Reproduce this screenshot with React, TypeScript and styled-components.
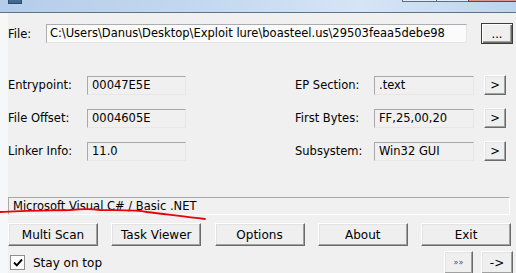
import React from 'react';
import styled, { createGlobalStyle } from 'styled-components';

const GlobalStyle = createGlobalStyle`
  html, body {
    margin: 0;
    padding: 0;
    background: #f0f0f0;
  }
  body {
    font-family: "DejaVu Sans", Verdana, sans-serif;
    font-size: 11.5px;
    color: #000;
  }
`;

type Field = { label: string; value: string };

const LEFT_FIELDS: Field[] = [
  { label: 'Entrypoint:', value: '00047E5E' },
  { label: 'File Offset:', value: '0004605E' },
  { label: 'Linker Info:', value: '11.0' },
];

const RIGHT_FIELDS: Field[] = [
  { label: 'EP Section:', value: '.text' },
  { label: 'First Bytes:', value: 'FF,25,00,20' },
  { label: 'Subsystem:', value: 'Win32 GUI' },
];

const ACTIONS = ['Multi Scan', 'Task Viewer', 'Options', 'About', 'Exit'];

const App: React.FC = () => {
  return (
    <>
      <GlobalStyle />
      <SWindow>
        <STitleBar>
          <STitleIcon />
          <STitleText>File Info</STitleText>
          <SCaption>
            <SCaptionButton width={35} />
            <SCaptionButton width={33} />
            <SCaptionButton width={54} close />
          </SCaption>
        </STitleBar>

        <SClient>
          <SFileRow>
            <SLabel>File:</SLabel>
            <SPathBox>C:\Users\Danus\Desktop\Exploit lure\boasteel.us\29503feaa5debe98</SPathBox>
            <SBrowseButton>...</SBrowseButton>
          </SFileRow>

          <SFields>
            <SColumn>
              {LEFT_FIELDS.map((f) => (
                <SFieldRow key={f.label}>
                  <SFieldLabel>{f.label}</SFieldLabel>
                  <SValueBox width={99}>{f.value}</SValueBox>
                </SFieldRow>
              ))}
            </SColumn>
            <SColumn>
              {RIGHT_FIELDS.map((f) => (
                <SFieldRow key={f.label}>
                  <SFieldLabel>{f.label}</SFieldLabel>
                  <SValueBox width={100}>{f.value}</SValueBox>
                  <SSmallButton>&gt;</SSmallButton>
                </SFieldRow>
              ))}
            </SColumn>
          </SFields>

          <SStatusWrap>
            <SStatusBox>Microsoft Visual C# / Basic .NET</SStatusBox>
            {/* red hand-drawn underline from the screenshot */}
            <SScribble viewBox="0 0 210 12" width={210} height={12}>
              <path
                d="M0 3 C 20 1.5, 45 1.5, 70 1 C 80 0, 90 -0.5, 100 1 C 115 1.5, 135 0.5, 147 3 C 165 5, 185 8, 205 10"
                fill="none"
                stroke="#e8000b"
                strokeWidth={1.8}
                strokeLinecap="round"
              />
            </SScribble>
          </SStatusWrap>

          <SActions>
            {ACTIONS.map((a) => (
              <SActionButton key={a}>{a}</SActionButton>
            ))}
          </SActions>

          <SBottomRow>
            <SCheckLabel>
              <SCheckBox>
                <svg width="10" height="9" viewBox="0 0 10 9">
                  <path d="M1 4.5 L3.8 7.3 L9 1.5" fill="none" stroke="#000" strokeWidth={1.9} />
                </svg>
              </SCheckBox>
              Stay on top
            </SCheckLabel>
            <SNavButtons>
              <SNavButton small>»»</SNavButton>
              <SNavButton>-&gt;</SNavButton>
            </SNavButtons>
          </SBottomRow>
        </SClient>
      </SWindow>
    </>
  );
};

const SWindow = styled.div`
  display: flex;
  flex-direction: column;
  width: 516px;
  height: 273px;
  overflow: hidden;
  background: #f0f0f0;
`;

const STitleBar = styled.div`
  display: flex;
  align-items: flex-end;
  height: 12px;
  padding-left: 8px;
  overflow: hidden;
  background: linear-gradient(90deg, #b4cde9 0%, #c6daf0 45%, #d6e5f5 70%, #bed4ec 100%);
  border-bottom: 1px solid #5d738c;
  flex-shrink: 0;
`;

const STitleIcon = styled.div`
  width: 12px;
  height: 14px;
  margin-bottom: 8px;
  background: linear-gradient(180deg, #6f8fb3, #3f628e);
  border: 1px solid #2d4a70;
`;

const STitleText = styled.div`
  margin-left: 7px;
  margin-bottom: 9px;
  font-family: "DejaVu Sans", sans-serif;
  font-size: 12px;
  line-height: 14px;
  color: #000;
`;

const SCaption = styled.div`
  display: flex;
  align-self: flex-start;
  margin-left: auto;
  margin-right: -6px;
`;

const SCaptionButton = styled.div<{ width: number; close?: boolean }>`
  width: ${(p) => p.width}px;
  height: 2px;
  box-sizing: border-box;
  background: ${(p) => (p.close ? '#d89a8e' : '#e3edf7')};
  border: 1px solid ${(p) => (p.close ? '#7b3a30' : '#5f6f82')};
  border-top: none;
  margin-left: -1px;
`;

const SClient = styled.div`
  display: flex;
  flex-direction: column;
  flex: 1;
  padding: 10px 3px 0 8px;
  background: #f0f0f0;
  box-shadow: inset 8px 0 0 #f6f7f9;
`;

const SLabel = styled.div`
  white-space: nowrap;
`;

const SFileRow = styled.div`
  display: flex;
  align-items: center;
  height: 21px;

  ${SLabel} {
    width: 38px;
  }
`;

const SPathBox = styled.div`
  width: 422px;
  height: 19px;
  box-sizing: border-box;
  padding: 0 3px;
  line-height: 17px;
  background: #fbfbfb;
  border: 1px solid #e2e4e7;
  border-top-color: #abadb3;
  border-left-color: #abadb3;
  white-space: nowrap;
  overflow: hidden;
`;

const SButtonBase = styled.button`
  box-sizing: border-box;
  padding: 0;
  font-family: inherit;
  font-size: inherit;
  color: #000;
  background: #efefef;
  border: 1px solid;
  border-color: #ffffff #6b6b6b #6b6b6b #ffffff;
  box-shadow: inset -1px -1px 0 #a0a0a0, inset 1px 1px 0 #e3e3e3;
  cursor: default;
`;

const SBrowseButton = styled(SButtonBase)`
  width: 32px;
  height: 21px;
  margin-left: 14px;
  border: 1px solid #3c3c3c;
  box-shadow: inset 1px 1px 0 #ffffff, inset -1px -1px 0 #6b6b6b, inset -2px -2px 0 #a0a0a0;
  line-height: 12px;
`;

const SFields = styled.div`
  display: flex;
  gap: 109px;
  margin-top: 31px;
`;

const SColumn = styled.div`
  display: flex;
  flex-direction: column;
  gap: 13px;
`;

const SFieldRow = styled.div`
  display: flex;
  align-items: center;
  height: 20px;
`;

const SFieldLabel = styled.div`
  width: 79px;
  white-space: nowrap;
`;

const SValueBox = styled.div<{ width: number }>`
  width: ${(p) => p.width}px;
  height: 19px;
  box-sizing: border-box;
  padding: 0 4px;
  line-height: 17px;
  border: 1px solid #e6e6e6;
  border-top-color: #a9a9a9;
  border-left-color: #a9a9a9;
  white-space: nowrap;
`;

const SSmallButton = styled(SButtonBase)`
  width: 22px;
  height: 20px;
  margin-left: 10px;
  line-height: 16px;
`;

const SStatusWrap = styled.div`
  position: relative;
  margin-top: 36px;
`;

const SStatusBox = styled.div`
  width: 502px;
  height: 18px;
  box-sizing: border-box;
  padding: 0 4px;
  line-height: 16px;
  border: 1px solid #ffffff;
  border-top-color: #a9a9a9;
  border-left-color: #a9a9a9;
  white-space: nowrap;
`;

const SScribble = styled.svg`
  position: absolute;
  left: -8px;
  top: 12px;
  overflow: visible;
`;

const SActions = styled.div`
  display: flex;
  justify-content: space-between;
  width: 503px;
  margin-top: 8px;
`;

const SActionButton = styled(SButtonBase)`
  width: 90px;
  height: 23px;
  font-size: 12px;
`;

const SBottomRow = styled.div`
  display: flex;
  align-items: center;
  justify-content: space-between;
  margin-top: 5px;
  padding-left: 2px;
`;

const SCheckLabel = styled.label`
  display: flex;
  align-items: center;
  gap: 8px;
  font-size: 12px;
`;

const SCheckBox = styled.span`
  display: flex;
  align-items: center;
  justify-content: center;
  width: 15px;
  height: 15px;
  box-sizing: border-box;
  background: #fff;
  border: 1px solid #8e8f8f;
`;

const SNavButtons = styled.div`
  display: flex;
  gap: 8px;
`;

const SNavButton = styled(SButtonBase)<{ small?: boolean }>`
  width: ${(p) => (p.small ? 29 : 32)}px;
  height: 23px;
  font-size: ${(p) => (p.small ? '8px' : '12px')};
  color: ${(p) => (p.small ? '#3a4a8a' : '#000')};
`;

export default App;
